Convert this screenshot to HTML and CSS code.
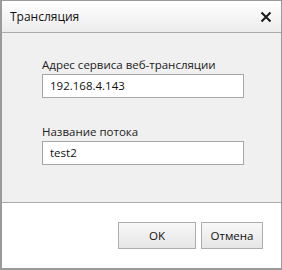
FILE: index.html
```html
<!DOCTYPE html>
<html lang="ru">
<head>
<meta charset="utf-8">
<link rel="stylesheet" href="styles.css">
</head>
<body>
<div class="dialog">
  <div class="titlebar">
    <span class="title">Трансляция</span>
    <span class="close" aria-label="Закрыть">
      <svg width="12" height="12" viewBox="0 0 12 12"><path d="M1.5 1.5 L10.5 10.5 M10.5 1.5 L1.5 10.5" stroke="#1a1a1a" stroke-width="2" stroke-linecap="butt"/></svg>
    </span>
  </div>
  <div class="content">
    <div class="field">
      <label class="label">Адрес сервиса веб-трансляции</label>
      <div class="input">192.168.4.143</div>
    </div>
    <div class="field">
      <label class="label">Название потока</label>
      <div class="input">test2</div>
    </div>
  </div>
  <div class="footer">
    <button class="btn btn-ok">OK</button>
    <button class="btn btn-cancel">Отмена</button>
  </div>
</div>
</body>
</html>
```
FILE: styles.css
```css
html, body {
  margin: 0;
  padding: 0;
  background: #ffffff;
}
.dialog {
  width: 282px;
  height: 270px;
  box-sizing: border-box;
  border: 1px solid #9a9a9a;
  border-left-width: 2px;
  border-bottom-width: 2px;
  display: flex;
  flex-direction: column;
  font-family: "Open Sans", "Noto Sans", sans-serif;
  color: #1e1e1e;
}
.titlebar {
  height: 31px;
  flex: none;
  border-bottom: 1px solid #ababab;
  background: linear-gradient(#ffffff, #ececec);
  display: flex;
  align-items: center;
  justify-content: space-between;
  padding: 0 9px 0 8px;
}
.title {
  font-size: 12px;
  color: #111;
}
.close {
  display: flex;
  width: 12px;
  height: 12px;
}
.content {
  flex: none;
  height: 170px;
  background: #f0f0f0;
  border-bottom: 1px solid #ababab;
  padding: 24px 0 0 40px;
  box-sizing: border-box;
  display: flex;
  flex-direction: column;
  gap: 26px;
}
.field {
  display: flex;
  flex-direction: column;
  gap: 1px;
}
.label {
  font-size: 11.5px;
  line-height: 16px;
  color: #222;
}
.input {
  width: 202px;
  height: 24px;
  box-sizing: border-box;
  border: 1px solid #a6a6a6;
  background: #fff;
  font-size: 11.5px;
  line-height: 22px;
  padding-left: 7px;
  color: #111;
}
.footer {
  flex: 1;
  background: #fff;
  display: flex;
  justify-content: flex-end;
  align-items: flex-start;
  padding: 19px 18px 0 0;
  gap: 5px;
}
.btn {
  height: 27px;
  box-sizing: border-box;
  border: 1px solid #adadad;
  background: linear-gradient(#f8f8f8, #e6e6e6);
  font-family: "Open Sans", "Noto Sans", sans-serif;
  font-size: 11.5px;
  color: #111;
  padding: 0;
}
.btn-ok { width: 78px; }
.btn-cancel { width: 62px; }
```
